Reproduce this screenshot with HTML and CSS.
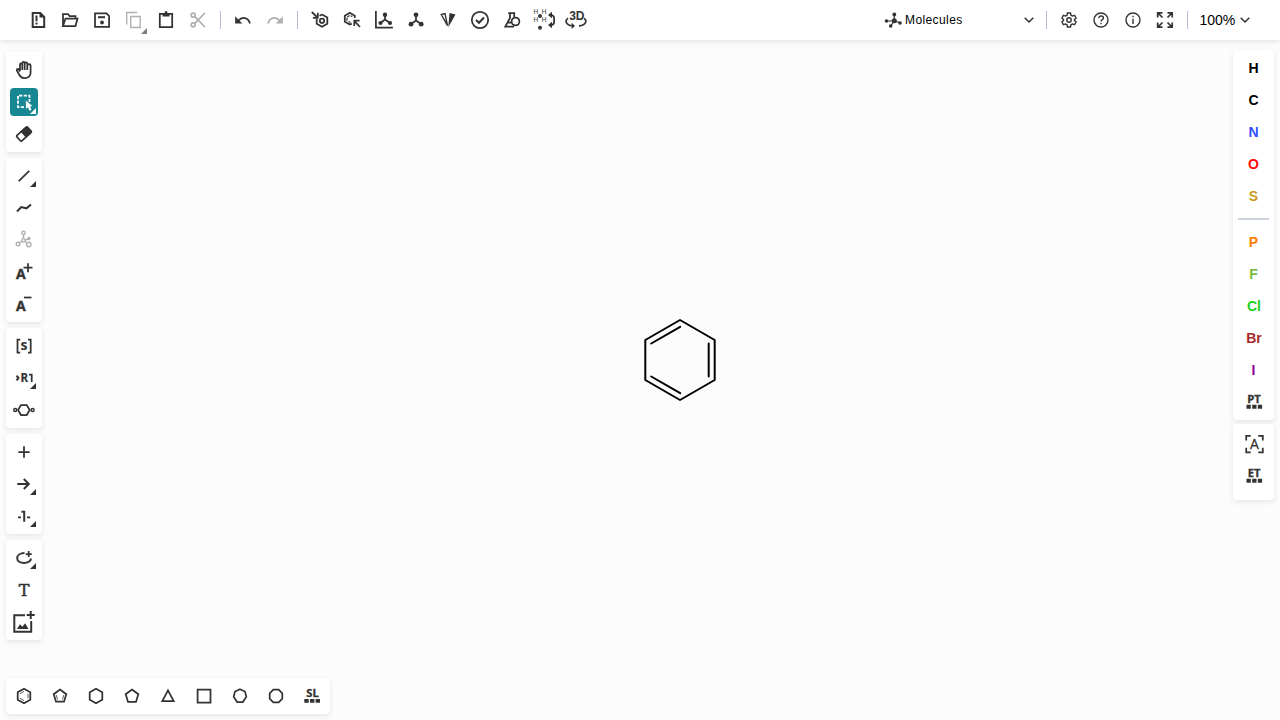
FILE: index.html
```html
<!DOCTYPE html>
<html lang="en">
<head>
<meta charset="utf-8">
<title>Ketcher</title>
<link rel="stylesheet" href="styles.css">
</head>
<body>
<div class="app">
<header class="topbar">
  <div class="tools file">
    <button><svg viewBox="0 0 24 24"><path d="M6.700 5h7.500l4 4v10H6.700z"/><path class="f" d="M13.500 4l5.500 5.500h-5.500z"/><path d="M10.500 7.500v5.700M10.500 14.600v1.900"/></svg></button>
    <button><svg viewBox="0 0 24 24"><path class="m" d="M5 18V6h5l1.500 2H17.500v2.500M5 18l2.500-7.500H19.500L17.500 18z"/></svg></button>
    <button><svg viewBox="0 0 24 24"><path class="m" d="M5 5.300h11.500l2.600 2.700v10.800H5z"/><path d="M8 9.200h7"/><circle class="f" cx="12" cy="14.500" r="1.900"/></svg></button>
    <button class="off"><svg viewBox="0 0 24 24"><path class="s" d="M4.700 16.500v-12h10.500M8.700 8.500h9.500v11H8.700z"/></svg><i class="corner"></i></button>
    <button><svg viewBox="0 0 24 24"><path class="m" d="M5.800 5.800h12.400v13.400H5.800z"/><path class="f" d="M8.500 5h2l.5-1.700h2l.5 1.700h2v3.500h-7z"/></svg></button>
    <button class="off"><svg viewBox="0 0 24 24"><g class="m"><circle cx="7.200" cy="7.200" r="2"/><circle cx="7.200" cy="16.800" r="2"/><path d="M8.700 8.700L19 19M8.700 15.300L19 5"/></g></svg></button>
  </div>
  <span class="divider"></span>
  <div class="tools history">
    <button><svg viewBox="0 0 24 24"><path class="m" d="M7 12.800c4.300-4.600 10.300-3.500 12 2.600"/><path class="f" d="M4.100 8.300v7.200h7.200z"/></svg></button>
    <button class="off"><svg viewBox="0 0 24 24"><path class="m" d="M17 12.800c-4.300-4.600-10.300-3.500-12 2.600"/><path class="f" d="M19.900 8.300v7.200h-7.200z"/></svg></button>
  </div>
  <span class="divider"></span>
  <div class="tools chem">
    <button><svg viewBox="0 0 24 24"><path class="m" d="M14 6.400l5.300 3v6.400l-5.300 3-5.300-3V11M11.500 7.800L14 6.400"/><circle class="m" cx="14" cy="12.700" r="2.200"/><path class="m" d="M3.800 4l5.700 5.500M9.800 4.800v5H4.900"/></svg></button>
    <button><svg viewBox="0 0 24 24"><path class="m" d="M14.800 10V7.700L9.800 4.800 4.800 7.700v6l5 2.900 2-1"/><path class="t" d="M7 12.800V9l3-1.700 2.300 1.300M8.500 13.500l2 1" stroke-dasharray="3 1"/><path class="m" d="M14.300 12.800l5.700 6.200M14.300 18v-5.300h5.300"/></svg></button>
    <button><svg viewBox="0 0 24 24"><path class="m" d="M3.900 3v16.500h17"/><path class="m" d="M13 7v4.500L8.500 15M13 11.500l5 3.500"/><g class="f"><circle cx="13" cy="6.700" r="2.200"/><circle cx="8.500" cy="15" r="2.100"/><circle cx="18" cy="15" r="2.100"/></g></svg></button>
    <button><svg viewBox="0 0 24 24"><path class="m" d="M12 7v5.500L7 16M12 12.500l5 3.500"/><g class="f"><circle cx="12" cy="6.800" r="2.400"/><circle cx="7" cy="16.200" r="2.400"/><circle cx="17.200" cy="16.200" r="2.400"/></g></svg></button>
    <button><svg viewBox="0 0 24 24"><path class="s" d="M5.300 6.500L9 5.600l2.500 12z"/><path class="f" d="M13.500 5l6 1.600-7.200 12.600z"/></svg></button>
    <button><svg viewBox="0 0 24 24"><circle class="m" cx="12" cy="12" r="8.200"/><path d="M8 12l3 2.800 5-5.300"/></svg></button>
    <button><svg viewBox="0 0 24 24"><path class="m" d="M8.200 5h7M10 5v5L5.300 18.500H14M14.200 5v4.200M7.500 14.500h3.800"/><circle class="m" cx="15.500" cy="13.500" r="3.900"/></svg></button>
    <button><svg viewBox="0 0 24 24"><g class="atom-label"><text x="3.800" y="6.200">H</text><text x="12" y="6.200">H</text><text x="3.800" y="14.200">H</text><text x="12" y="14.200">H</text></g><g class="f"><circle cx="8" cy="8" r="2"/><circle cx="8" cy="19.800" r="2"/><path d="M16 7l4-3.200v6.400zM16 17l4-3.200v6.400z"/></g><path class="m" d="M18.500 7c2 0 3.600 1 3.600 3v4c0 2-1.600 3-3.600 3"/></svg></button>
    <button><svg viewBox="0 0 24 24"><text class="three-d" x="12.800" y="12.200">3D</text><path class="m" d="M4 10.300c-2.500 1.500-2.800 4.500 0 6.200 1.300.8 3 1.300 5 1.400M20 10.300c2.500 1.500 2.600 4.500-.2 6.200-1.300.8-3 1.300-4.800 1.400"/><path class="f" d="M7.700 14.700l3.300 3.200-3.300 3z"/></svg></button>
  </div>
  <div class="mode">
    <svg viewBox="0 0 24 24"><path class="t" d="M5.300 13h8l0-6.500M9.700 18l3.600-5.300 6 2.300"/><g class="f"><circle cx="5.500" cy="13" r="1.800"/><circle cx="13.300" cy="6.500" r="1.900"/><circle cx="19" cy="15" r="1.800"/><circle cx="9.700" cy="18" r="1.800"/><circle cx="13.300" cy="12.700" r="2.500"/></g></svg>
    <span>Molecules</span>
    <svg class="chevron" viewBox="0 0 10 6"><path d="M.7.7L5 5 9.300.7"/></svg>
  </div>
  <span class="divider"></span>
  <div class="tools view">
    <button><svg viewBox="0 0 24 24"><path class="s" d="M10.500 5h3l.5 2.200 1.500.9 2.100-.7 1.500 2.600-1.600 1.500v1l1.600 1.500-1.500 2.600-2.100-.7-1.500.9-.5 2.200h-3l-.5-2.200-1.500-.9-2.100.7L4.900 14l1.600-1.500v-1L4.900 10l1.500-2.600 2.100.7 1.500-.9z"/><circle class="s" cx="12" cy="12" r="2.200"/></svg></button>
    <button><svg viewBox="0 0 24 24"><circle class="s" cx="12" cy="12" r="7"/><path class="s" d="M9.800 10.200c0-3 4.600-2.700 4.600-.2 0 1.700-2.400 1.600-2.400 3.600M12 14.800v1.500"/></svg></button>
    <button><svg viewBox="0 0 24 24"><circle class="s" cx="12" cy="12" r="7"/><path class="s" d="M12 10.700v5.200M12 7.800v1.500"/></svg></button>
    <button><svg viewBox="0 0 24 24"><path class="m" d="M4.700 9.500V4.800h4.800M5 5l4.500 4.500M14.500 4.800h4.700v4.700M19 5l-4.500 4.500M4.700 14.500v4.700h4.800M5 19l4.500-4.500M14.500 19.200h4.700v-4.700M19 19l-4.500-4.500"/></svg></button>
  </div>
  <span class="divider"></span>
  <div class="zoom"><span>100%</span><svg class="chevron" viewBox="0 0 10 6"><path d="M.7.7L5 5 9.300.7"/></svg></div>
</header>

<main class="workspace">
  <svg class="canvas" viewBox="0 40 1280 680"><path d="M680 320l34.700 20v40L680 400l-34.700-20v-40zM651.200 343.500l29-16.700M708.700 343.500v33M651.200 376.500l29 16.700"/></svg>
  <aside class="left">
    <div class="card">
      <button><svg viewBox="0 0 24 24"><path class="m" d="M8 12.500V6.700c0-1.800 2.300-1.800 2.300 0V12V5.200c0-1.800 2.400-1.800 2.400 0V12V5.700c0-1.800 2.600-1.800 2.600 0V12V7.500c0-1.800 3.300-1.800 3.300 0v7c0 3.500-2.500 5.600-6.200 5.600-3 0-4-1.300-5-3.100l-2.600-4.600c-.3-1.500 1.200-1.900 2.100-.8L8 13.500"/></svg></button>
      <button class="selected"><svg viewBox="0 0 24 24"><path class="m" stroke-dasharray="3.200 1.400" d="M12 17H6V5.700h11.500V12"/><path class="f" d="M13.800 10.500l.2 8.200 2-1.500 1.500 3.500 2-.9-1.500-3.400 2.500-.3z"/></svg><i class="corner"></i></button>
      <button><svg viewBox="0 0 24 24"><g transform="rotate(-42 12 12)"><rect class="m" x="4.800" y="8.400" width="14.400" height="7.200" rx="1"/><path class="f" d="M11 8h8v8h-8z"/></g></svg></button>
    </div>
    <div class="card">
      <button><svg viewBox="0 0 24 24"><path class="m" d="M6.800 17.200L17.200 6.800"/></svg><i class="corner"></i></button>
      <button><svg viewBox="0 0 24 24"><path d="M5 15.500L9.300 11l5.200 1.300L19 8.600"/></svg></button>
      <button class="off"><svg viewBox="0 0 24 24"><g class="s"><circle cx="11.500" cy="4.900" r="1.700"/><circle cx="11.500" cy="12.300" r="1.700"/><circle cx="6" cy="16.100" r="1.800"/><circle cx="16.800" cy="16.500" r="2.200"/><circle cx="17" cy="10.500" r="1"/><path d="M11.500 6.700v3.800M10 13.300l-2.500 1.700M13 13.300l2 1.600M13.200 12l2.800-1"/></g></svg></button>
      <button><svg viewBox="0 0 24 24"><text class="letter" x="8.800" y="19.200">A</text><path class="m" d="M16 3.200v9M11.500 7.700h9"/></svg></button>
      <button><svg viewBox="0 0 24 24"><text class="letter" x="8.800" y="19">A</text><path class="m" d="M12 5.500h7.500"/></svg></button>
    </div>
    <div class="card">
      <button><svg viewBox="0 0 24 24"><path class="m" d="M8.200 5.500H5.500v13h2.700M16 5.500h2.700v13H16"/><text class="sgroup" x="12.100" y="15.800">s</text></svg></button>
      <button><svg viewBox="0 0 24 24"><path d="M4.500 9.700L6.500 12l-2 2.300"/><text class="rgroup" x="8.500" y="16">R</text><path class="m" d="M17 8.700h2.700V16"/></svg><i class="corner"></i></button>
      <button><svg viewBox="0 0 24 24"><path class="m" d="M9 7h5.700l3 5-3 5H9l-3-5z"/><circle class="s" cx="3.200" cy="12" r="1.500"/><circle class="s" cx="20.600" cy="12" r="1.500"/></svg></button>
    </div>
    <div class="card">
      <button><svg viewBox="0 0 24 24"><path class="m" d="M12 6.300v11.400M6.300 12h11.400"/></svg></button>
      <button><svg viewBox="0 0 24 24"><path d="M5.300 12h11.300M11.800 7l5 5-5 5"/></svg><i class="corner"></i></button>
      <button><svg viewBox="0 0 24 24"><path class="m" d="M6 13.300h3M15 13.300h3.200"/><path d="M9.500 7.700h2.700v10"/></svg><i class="corner"></i></button>
    </div>
    <div class="card">
      <button><svg viewBox="0 0 24 24"><path d="M12.500 7c-4.200 0-7.300 2.200-7.300 5.200s3.100 4.800 6.800 4.800 7-1.800 7-4.500"/><path class="m" d="M16.700 5v6M13.700 8h6"/></svg><i class="corner"></i></button>
      <button><svg viewBox="0 0 24 24"><text class="slab" x="12" y="17.700">T</text></svg></button>
      <button><svg viewBox="0 0 24 24"><path d="M13 5.200H2.300v16.600h16.900V11"/><path d="M18.700 1v8M14.700 5h8"/><path class="f" d="M5 19l3-4.800 2.300 2.600 2.900-3.600 3.300 5.800z"/></svg></button>
    </div>
  </aside>
  <aside class="right">
    <div class="card atoms">
      <button class="h">H</button><button class="c">C</button><button class="n">N</button><button class="o">O</button><button class="su">S</button>
      <hr>
      <button class="p">P</button><button class="fl">F</button><button class="cl">Cl</button><button class="br">Br</button><button class="io">I</button>
      <button><svg viewBox="0 0 24 24"><text class="table" x="12" y="12.700">PT</text><path class="f" d="M4.500 14.800h4.300v4H4.500zM10.200 14.800h4.300v4h-4.300zM15.800 14.800h4.300v4h-4.300z"/></svg></button>
    </div>
    <div class="card extra">
      <button><svg viewBox="0 0 24 24"><path class="m" d="M4.200 8.500V3.800h4.500M16.300 3.800h4.500v4.700M20.800 15.700v4.700h-4.500M8.700 20.400H4.200v-4.700"/><text class="any" x="12.500" y="17">A</text></svg></button>
      <button><svg viewBox="0 0 24 24"><text class="table" x="12" y="12.700">ET</text><path class="f" d="M4.500 14.800h4.300v4H4.500zM10.200 14.800h4.300v4h-4.300zM15.800 14.800h4.300v4h-4.300z"/></svg></button>
    </div>
  </aside>
  <footer class="card templates">
    <button><svg viewBox="0 0 24 24"><path class="m" d="M12 4.700l6.300 3.600v7.400L12 19.300l-6.300-3.600V8.300z"/><path class="thin" d="M8 9.700l4-2.300M16 9.700v4.600M8 14.300l4 2.300"/></svg></button>
    <button><svg viewBox="0 0 24 24"><path class="m" d="M12 5.500l6.300 4.700L16 17.700H8L5.700 10.200z"/><path class="thin" d="M8.200 11l1.300 4.500M15.800 11l-1.300 4.500"/></svg></button>
    <button><svg viewBox="0 0 24 24"><path class="m" d="M12 4.700l6.300 3.600v7.400L12 19.300l-6.300-3.600V8.300z"/></svg></button>
    <button><svg viewBox="0 0 24 24"><path class="m" d="M12 5.500l6.300 4.700L16 17.900H8l-2.300-7.700z"/></svg></button>
    <button><svg viewBox="0 0 24 24"><path class="m" d="M12 6.300l5.700 10.900H6.300z"/></svg></button>
    <button><svg viewBox="0 0 24 24"><path class="m" d="M5.600 5.600h12.900v12.900H5.600z"/></svg></button>
    <button><svg viewBox="0 0 24 24"><path class="m" d="M12 5.200l5 2.300 1.300 5.400-3.500 5.200H9.200l-3.500-5.200L7 7.500z"/></svg></button>
    <button><svg viewBox="0 0 24 24"><path class="m" d="M9.300 5.700h5.400l3.600 3.600v5.400l-3.600 3.600H9.300l-3.600-3.600V9.300z"/></svg></button>
    <button><svg viewBox="0 0 24 24"><text class="table" x="12.500" y="12.700">SL</text><path class="f" d="M4.300 15h4.400v3.800H4.300zM10 15h4.400v3.800H10zM15.600 15H20v3.800h-4.400z"/></svg></button>
  </footer>
</main>
</div>
</body>
</html>
```
FILE: styles.css
```css
* { box-sizing: border-box; }
body { margin: 0; background: #fcfcfc; font-family: "Liberation Sans", Arial, sans-serif; color: #000; }
.app { height: 720px; display: flex; flex-direction: column; overflow: hidden; }

button {
  flex: none; width: 32px; height: 32px; padding: 0; border: 0; background: none; color: #333;
  display: flex; align-items: center; justify-content: center; position: relative; font: inherit;
}
svg { width: 24px; height: 24px; flex: none; display: block; overflow: visible; fill: none; stroke: currentColor; stroke-width: 2; }
svg .m { stroke-width: 1.75; }
svg .s { stroke-width: 1.4; }
svg .t { stroke-width: 1.2; }
svg .thin { stroke-width: .8; }
svg .f { fill: currentColor; stroke: none; }
svg text { fill: currentColor; stroke: none; text-anchor: middle; font-family: "Open Sans", sans-serif; font-weight: 700; }
.off { color: #b0b0b0; }
.corner { position: absolute; right: 4px; bottom: 5px; width: 6px; height: 6px; background: currentColor; clip-path: polygon(100% 0, 100% 100%, 0 100%); }

.topbar {
  height: 40px; flex: none; display: flex; align-items: center; padding: 0 30px 0 22px;
  background: #fff; box-shadow: 0 2px 5px rgba(103, 104, 132, .15); position: relative; z-index: 2;
}
.tools { display: flex; }
.divider { width: 1px; height: 18px; background: #b4b9d6; flex: none; }
.file { margin-right: 6px; }
.file .corner { right: 3px; bottom: 2px; width: 6px; height: 6px; color: #7d7d7d; }
.history { margin: 0 6px; }
.chem { margin-left: 6px; }
.mode { margin-left: auto; width: 154px; display: flex; align-items: center; font-size: 12px; letter-spacing: .4px; }
.mode svg { color: #333; margin-left: .5px; }
.mode span { margin-left: .5px; }
.chevron { width: 10px; height: 6px; stroke: #333; stroke-width: 1.5; }
.mode .chevron { margin-left: auto; }
.mode + .divider { margin-left: 12px; }
.view { margin: 0 6px; }
.zoom { display: flex; align-items: center; justify-content: space-between; margin-left: 11.5px; font-size: 14px; }
.view + .divider + .zoom { width: 50.5px; }

.workspace {
  flex: 1; position: relative; display: grid;
  grid-template: 1fr 36px / 1fr 1fr; padding: 10px 6px 6px;
}
.canvas { position: absolute; inset: 0; width: 1280px; height: 680px; stroke: #000; stroke-width: 2; stroke-linejoin: round; stroke-linecap: round; }
.card { background: #fff; border-radius: 4px; box-shadow: 0 2px 5px rgba(103, 104, 132, .15); position: relative; }
.left { width: 36px; padding-top: 2px; display: flex; flex-direction: column; gap: 6px; }
.left .card { padding: 2px 0; }
.left button { width: 36px; }
.left .corner { right: 6px; bottom: 5px; }
.left .selected { width: 28px; height: 28px; margin: 2px 4px; border-radius: 4px; background: #188794; color: #fff; }
.left .selected .corner { right: 2px; bottom: 2px; width: 6px; height: 6px; }
.right { width: 41px; justify-self: end; display: flex; flex-direction: column; gap: 4px; }
.right .card { display: flex; flex-direction: column; align-items: center; }
.right button { width: 41px; }
.atoms { padding: 2px 0; font-size: 14px; font-weight: 700; }
.atoms hr { width: 31px; height: 2px; border: 0; margin: 6px 0; background: #cad3dd; }
.extra { padding: 4px 0 8px; }
.templates { width: 324px; display: flex; align-items: center; }
.templates button { width: 36px; }

.h, .c { color: #000; }
.n { color: #304ff7; }
.o { color: #ff0d0d; }
.su { color: #c99a19; }
.p { color: #ff8000; }
.fl { color: #78bc42; }
.cl { color: #1fd01f; }
.br { color: #a62929; }
.io { color: #940094; }
.right .cl, .right .br { padding-left: 1px; }

svg .atom-label text { font-size: 6.5px; font-weight: 400; font-family: "Liberation Sans", sans-serif; }
svg .three-d { font-size: 12px; font-family: "Liberation Sans", sans-serif; }
svg .letter { font-size: 14px; stroke: currentColor; stroke-width: .4; }
svg .sgroup { font-size: 14px; }
svg .rgroup { font-size: 11.5px; text-anchor: start; stroke: currentColor; stroke-width: .2; }
svg .slab { font-size: 16px; font-family: "DejaVu Serif", serif; font-weight: 400; stroke: currentColor; stroke-width: .5; }
svg .table { font-size: 11.2px; stroke: currentColor; stroke-width: .3; }
svg .any { font-size: 14px; font-weight: 400; stroke: currentColor; stroke-width: .3; }
```
